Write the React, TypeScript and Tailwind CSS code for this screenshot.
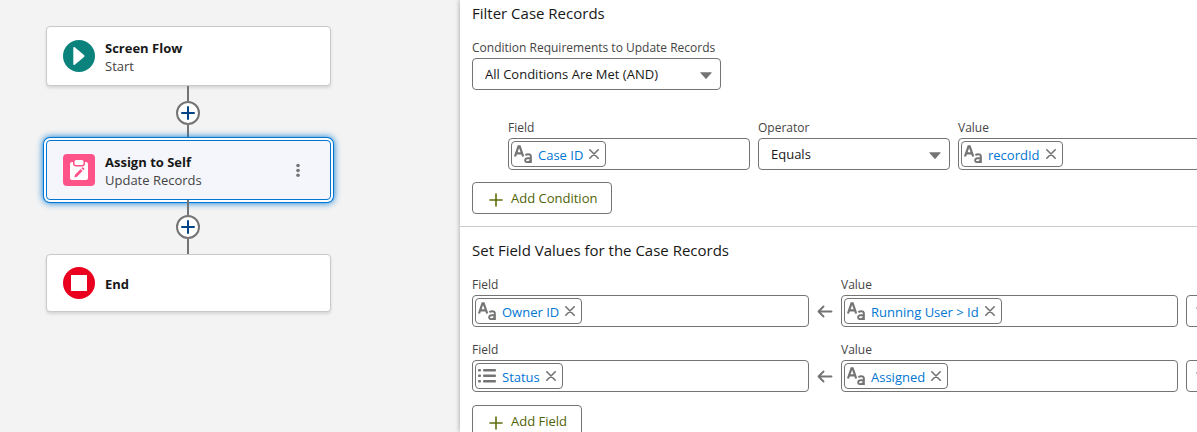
import type { ReactNode } from "react";

function StartIcon() {
  return (
    <svg viewBox="0 0 32 32" className="size-8 shrink-0" aria-hidden="true">
      <circle cx="16" cy="16" r="16" fill="#0b827c" />
      <path d="M10.300 8c0-1 .8-1.400 1.500-.7l9.200 7.800c.6.5.6 1.300 0 1.800l-9.200 7.800c-.7.6-1.500.2-1.500-.7z" fill="#fff" />
    </svg>
  );
}

function UpdateIcon() {
  return (
    <svg viewBox="0 0 32 32" className="size-8 shrink-0" aria-hidden="true">
      <rect width="32" height="32" rx="4" fill="#ff538a" />
      <path d="M9 8h14a2 2 0 0 1 2 2v14a2 2 0 0 1-2 2H9a2 2 0 0 1-2-2V10a2 2 0 0 1 2-2z" fill="#fff" />
      <rect x="10" y="5" width="12" height="7.500" rx="2.400" fill="#ff538a" />
      <rect x="11.500" y="6" width="9" height="5" rx="1.600" fill="#fff" />
      <path d="M11.200 23.500l.8-2.800 5.600-5.600 2 2-5.600 5.600zM18.400 14.300l.8-.8c.3-.3.7-.3 1 0l1 1c.3.3.3.7 0 1l-.8.8z" fill="#ff538a" />
    </svg>
  );
}

function EndIcon() {
  return (
    <svg viewBox="0 0 32 32" className="size-8 shrink-0" aria-hidden="true">
      <circle cx="16" cy="16" r="16" fill="#ea001e" />
      <rect x="8" y="8" width="16" height="16" fill="#fff" />
    </svg>
  );
}

function TextIcon() {
  return (
    <svg viewBox="0 0 18 18" className="size-[18px] shrink-0" fill="none" stroke="#747474" aria-hidden="true">
      <path d="M1 11.500L4.500 1.300h1.200L9.200 11.500M2.400 8.300h5.400" strokeWidth="2.200" />
      <path d="M11.400 10.200c.8-.6 1.800-.9 2.700-.9 1.900 0 2.800.8 2.800 2.400V18M16.700 13c-3.700 0-5.600.5-5.600 2.300 0 1.100.9 1.900 2.200 1.900 1.900 0 3.400-1.200 3.400-3" strokeWidth="1.900" />
    </svg>
  );
}

function ListIcon() {
  return (
    <svg viewBox="0 0 18 18" className="size-[18px] shrink-0" fill="#747474" aria-hidden="true">
      <rect x="0" y="2" width="3" height="2.500" rx="1" />
      <rect x="0" y="7.500" width="3" height="2.500" rx="1" />
      <rect x="0" y="13" width="3" height="2.500" rx="1" />
      <rect x="5" y="2" width="13" height="2.500" rx="1" />
      <rect x="5" y="7.500" width="13" height="2.500" rx="1" />
      <rect x="5" y="13" width="13" height="2.500" rx="1" />
    </svg>
  );
}

function FlowCard({ icon, title, subtitle, selected = false }: { icon: ReactNode; title: string; subtitle?: string; selected?: boolean }) {
  const look = selected
    ? "h-[60px] border-[#0176d3] bg-[#f4f6fb] shadow-[0_0_0_2px_#fff,0_0_0_3px_#0176d3,0_0_7px_3px_#0176d3]"
    : subtitle
      ? "h-[60px] border-[#c9c9c9] bg-white shadow-[0_2px_3px_rgba(0,0,0,0.12)]"
      : "h-[58px] border-[#c9c9c9] bg-white shadow-[0_2px_3px_rgba(0,0,0,0.12)]";
  return (
    <div className={`flex w-full items-center gap-2.5 rounded-[4px] border px-4 ${look}`}>
      {icon}
      <div className="flex-1 pt-px">
        <h3 className="text-[13px] leading-[18px] font-bold text-[#181818]">{title}</h3>
        {subtitle && <p className="text-[13px] leading-[18px] text-[#444]">{subtitle}</p>}
      </div>
      {selected && (
        <button type="button" aria-label="More actions" className="flex h-8 w-8 items-center justify-center">
          <svg viewBox="0 0 4 14" className="h-3.5 w-1" fill="#747474" aria-hidden="true">
            <circle cx="2" cy="2.500" r="1.800" />
            <circle cx="2" cy="7.500" r="1.800" />
            <circle cx="2" cy="12.200" r="1.800" />
          </svg>
        </button>
      )}
    </div>
  );
}

function Connector() {
  return (
    <div className="flex w-[284px] flex-col items-center">
      <div className="h-[15px] w-[2px] bg-[#747474]" />
      <button type="button" aria-label="Add element" className="flex size-6 items-center justify-center rounded-full border-2 border-[#747474] bg-white">
        <svg viewBox="0 0 14 14" className="size-3.5" stroke="#014486" strokeWidth="2" strokeLinecap="round" aria-hidden="true">
          <path d="M7 1v12M1 7h12" />
        </svg>
      </button>
      <div className="h-[15px] w-[2px] bg-[#747474]" />
    </div>
  );
}

function PillField({ id, label, value, icon = "text" }: { id: string; label: string; value: string; icon?: "text" | "list" }) {
  return (
    <div className="flex min-w-0 flex-1 flex-col gap-0.5">
      <label htmlFor={id} className="text-xs leading-4 text-[#444]">{label}</label>
      <div className="flex h-8 items-center rounded-[4px] border border-[#747474] bg-white pl-0.5">
        <span className="flex h-[26px] shrink-0 items-center rounded-[4px] border border-[#747474] pr-1.5 pl-0.5">
          {icon === "text" ? <TextIcon /> : <ListIcon />}
          <a href="#" className="ml-1.5 pt-0.5 text-[13px] leading-4 whitespace-nowrap text-[#0176d3]">{value}</a>
          <button type="button" aria-label={`Remove ${value}`} className="ml-1.5 flex">
            <svg viewBox="0 0 10 10" className="size-2.5" stroke="#747474" strokeWidth="1.600" strokeLinecap="round" aria-hidden="true">
              <path d="M.8.8l8.400 8.400M9.200.8L.8 9.200" />
            </svg>
          </button>
        </span>
        <input id={id} type="text" className="h-full min-w-0 flex-1 bg-transparent px-2 text-[13px] outline-none" />
      </div>
    </div>
  );
}

function SelectField({ id, label, value, width }: { id: string; label: string; value: string; width: string }) {
  return (
    <div className={`flex flex-col gap-0.5 ${width}`}>
      <label htmlFor={id} className="text-xs leading-4 whitespace-nowrap text-[#444]">{label}</label>
      <div className="grid items-center">
        <select id={id} defaultValue={value} className="col-start-1 row-start-1 h-8 w-full appearance-none rounded-[4px] border border-[#747474] bg-white px-3 pt-0.5 text-[13px] text-[#181818]">
          <option>{value}</option>
        </select>
        <svg viewBox="0 0 12 7" className="pointer-events-none col-start-1 row-start-1 mt-0.5 mr-[9px] h-[7px] w-3 justify-self-end" fill="#747474" aria-hidden="true">
          <path d="M.8.3h10.400c.5 0 .6.4.3.700L6.600 6.600c-.3.4-.9.4-1.200 0L.5 1C.2.7.3.3.8.3z" />
        </svg>
      </div>
    </div>
  );
}

function AddButton({ children }: { children: ReactNode }) {
  return (
    <button type="button" className="flex h-8 items-center gap-2 rounded-[4px] border border-[#747474] bg-white pt-0.5 pr-3.5 pl-4 text-[13px] text-[#4f6304]">
      <svg viewBox="0 0 14 14" className="mt-0.5 size-3.5" stroke="#5c6f0c" strokeWidth="1.600" strokeLinecap="round" aria-hidden="true">
        <path d="M7 1v12M1 7h12" />
      </svg>
      {children}
    </button>
  );
}

function Assignment({ id, field, value, icon }: { id: string; field: string; value: string; icon?: "text" | "list" }) {
  return (
    <div className="flex items-end">
      <PillField id={`${id}-field`} label="Field" value={field} icon={icon} />
      <div className="flex h-8 w-8 shrink-0 items-center justify-center">
        <svg viewBox="0 0 16 14" className="h-3.5 w-4" fill="none" stroke="#747474" strokeWidth="1.900" strokeLinecap="round" strokeLinejoin="round" aria-hidden="true">
          <path d="M14.500 7.500H1.500M6.500 2.500l-5 5 5 5" />
        </svg>
      </div>
      <PillField id={`${id}-value`} label="Value" value={value} />
      <button type="button" aria-label="Delete row" className="ml-2 flex size-8 shrink-0 items-center justify-center rounded-[4px] border border-[#747474] bg-white">
        <svg viewBox="0 0 14 14" className="size-3" fill="none" stroke="#747474" strokeWidth="1.500" strokeLinecap="round" aria-hidden="true">
          <path d="M1 3.500h12M5 3V1.500h4V3M3 6v6.500h8V6" />
        </svg>
      </button>
    </div>
  );
}

export default function App() {
  return (
    <div className="flex h-screen overflow-hidden bg-[#f3f3f3] font-['Open_Sans','Noto_Sans',sans-serif]">
      <main className="w-[460px] shrink-0 pt-[26px] pl-[46px]">
        <div className="flex w-[285px] flex-col">
          <FlowCard icon={<StartIcon />} title="Screen Flow" subtitle="Start" />
          <Connector />
          <FlowCard icon={<UpdateIcon />} title="Assign to Self" subtitle="Update Records" selected />
          <Connector />
          <FlowCard icon={<EndIcon />} title="End" />
        </div>
      </main>

      <aside className="min-w-0 flex-1 bg-white shadow-[0_0_5px_rgba(0,0,0,0.35)]">
        <div className="-mr-[21px]">
          <section className="flex flex-col border-b border-[#c9c9c9] px-3 pt-px pb-3">
            <h2 className="text-[15px] leading-6 text-[#181818]">Filter Case Records</h2>
            <div className="mt-[15px]">
              <SelectField id="requirements" label="Condition Requirements to Update Records" value="All Conditions Are Met (AND)" width="w-[249px]" />
            </div>
            <div className="mt-[30px] mr-1.5 flex gap-2 pl-9">
              <PillField id="condition-field" label="Field" value="Case ID" />
              <SelectField id="operator" label="Operator" value="Equals" width="w-48" />
              <PillField id="condition-value" label="Value" value="recordId" />
            </div>
            <div className="mt-3 flex">
              <AddButton>Add Condition</AddButton>
            </div>
          </section>

          <section className="flex flex-col pt-[11px] pl-3">
            <h2 className="text-[15px] leading-6 text-[#181818]">Set Field Values for the Case Records</h2>
            <div className="mt-[15px] flex flex-col gap-[15px]">
              <Assignment id="owner" field="Owner ID" value="Running User > Id" />
              <Assignment id="status" field="Status" value="Assigned" icon="list" />
            </div>
            <div className="mt-[13px] flex">
              <AddButton>Add Field</AddButton>
            </div>
          </section>
        </div>
      </aside>
    </div>
  );
}
